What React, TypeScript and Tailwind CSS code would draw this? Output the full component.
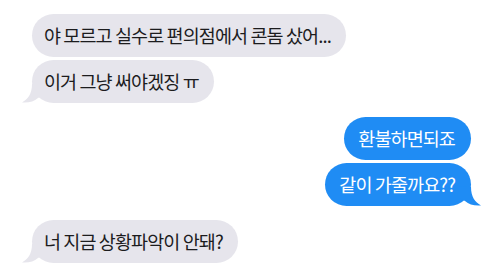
const font = "font-['Noto_Sans_CJK_KR','Noto_Sans',sans-serif]";

const Tail = ({ side, color }: { side: "left" | "right"; color: string }) => (
    <svg
        width="22"
        height="20"
        viewBox="0 0 22 20"
        className={side === "left" ? "absolute -left-[10px] bottom-0" : "absolute -right-[10px] bottom-0 -scale-x-100"}
    >
        <path d="M10 1 C10 11 6 16 0 19.5 C7 20 12 18.5 16 15 L22 12 L22 0 Z" fill={color} />
    </svg>
);

const Bubble = ({
    text,
    from,
    tail,
}: {
    text: string;
    from: "them" | "me";
    tail?: boolean;
}) => {
    const me = from === "me";
    return (
        <div
            className={
                "relative h-[43px] flex items-center rounded-[22px] text-[18.5px] tracking-[-0.9px] " +
                (me
                    ? "self-end bg-[#1f8cf4] text-white pl-[14px] pr-[16px]"
                    : "self-start bg-[#e6e5ec] text-[#1c1c1e] pl-[12px] pr-[15px]")
            }
        >
            {tail && <Tail side={me ? "right" : "left"} color={me ? "#1f8cf4" : "#e6e5ec"} />}
            <span className="relative">{text}</span>
        </div>
    );
};

export default function App() {
    return (
        <div className={"w-[500px] h-[272px] bg-white flex flex-col pt-[14px] pl-[32px] pr-[29px] " + font}>
            <div className="flex flex-col gap-[3px]">
                <Bubble from="them" text="야 모르고 실수로 편의점에서 콘돔 샀어..." />
                <Bubble from="them" text="이거 그냥 써야겠징 ㅠ" tail />
            </div>
            <div className="flex flex-col gap-[3px] mt-[14px]">
                <Bubble from="me" text="환불하면되죠" />
                <Bubble from="me" text="같이 가줄까요??" tail />
            </div>
            <div className="flex flex-col gap-[3px] mt-[14px]">
                <Bubble from="them" text="너 지금 상황파악이 안돼?" tail />
            </div>
        </div>
    );
}
